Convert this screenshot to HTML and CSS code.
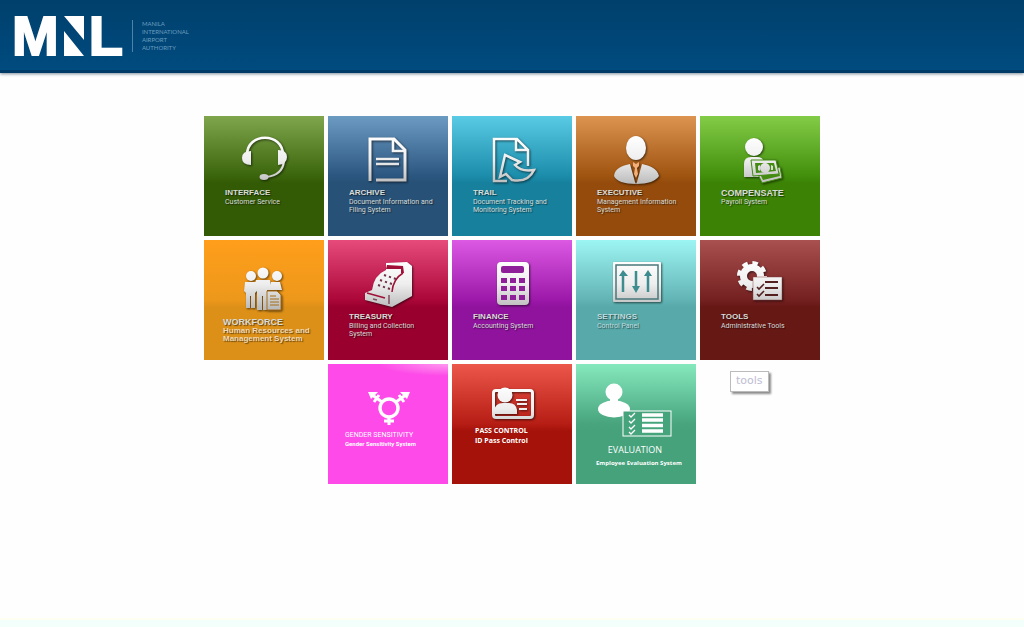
FILE: index.html
```html
<!DOCTYPE html>
<html lang="en">
<head>
<meta charset="utf-8">
<title>MNL Portal</title>
<meta name="viewport" content="width=device-width, initial-scale=1">
<link rel="stylesheet" href="styles.css">
</head>
<body>
<svg class="defs" aria-hidden="true">
  <defs>
    <linearGradient id="metal" gradientUnits="userSpaceOnUse" x1="0" y1="20" x2="0" y2="68">
      <stop offset="0" stop-color="#fff"/><stop offset=".5" stop-color="#eee"/><stop offset="1" stop-color="#bbb"/>
    </linearGradient>
  </defs>
</svg>
<header class="header">
  <div class="logo">
    <span>M</span>
    <svg class="mark" viewBox="0 0 20 40" aria-hidden="true"><path d="M0 0H20V24ZM0 15L20 40H0Z"/></svg>
    <span>L</span>
  </div>
  <div class="org">MANILA<br>INTERNATIONAL<br>AIRPORT<br>AUTHORITY</div>
</header>
<main class="main">
  <nav class="tiles">
    <a href="#" class="tile interface">
      <svg class="icon" viewBox="0 0 120 72"><g class="line"><path d="M43 39C43 16 79 16 79 39" stroke-width="2.6"/><path d="M80 45C79 55 72 60 62 61" stroke-width="2.2"/></g><path d="M47 35V49Q38 49 38 42Q38 35 47 35ZM74 34V49Q83 48 83 41Q83 34 74 34Z"/><ellipse cx="60" cy="61" rx="4.5" ry="3"/></svg>
      <strong>INTERFACE</strong><span>Customer Service</span>
    </a>
    <a href="#" class="tile archive">
      <svg class="icon" viewBox="0 0 120 72"><g class="line"><path d="M42 65V23H66L77 34V64H48" stroke-width="3"/><path d="M65 23V35H76" stroke-width="2.6"/><path d="M48 43H71M48 48H71" stroke-width="2.4"/></g></svg>
      <strong>ARCHIVE</strong><span>Document Information and Filing System</span>
    </a>
    <a href="#" class="tile trail">
      <svg class="icon" viewBox="0 0 120 72"><g class="line" stroke-width="2.5"><path d="M55 65H42V23H65L76 34V50M64 23V34H76"/><path d="M53 39L68 46L63 49Q69 56 82 54Q76 67 60 64L54 58L48 61Z"/></g></svg>
      <strong>TRAIL</strong><span>Document Tracking and Monitoring System</span>
    </a>
    <a href="#" class="tile executive">
      <svg class="icon" viewBox="0 0 120 72"><ellipse cx="60" cy="32" rx="10" ry="12"/><path d="M54 48L59 66L60 68C48 68 40 65 38 60C39 52 46 50 54 48ZM66 48L61 66L60 68C72 68 80 65 83 60C81 52 74 50 66 48Z"/><path d="M57 46L60 48L63 46V50L61 52L62 58L60 62L58 58L59 52L57 50Z" fill="#f6ae78"/></svg>
      <strong>EXECUTIVE</strong><span>Management Information System</span>
    </a>
    <a href="#" class="tile compensate">
      <svg class="icon" viewBox="0 0 120 72"><circle cx="54" cy="31" r="9"/><path d="M44 61V48Q44 41 51 41H57Q63 41 64 46V61Z"/><path d="M57 56L80 51L82 62L62 67Z" stroke="#438b12"/><path d="M60 58L79 55L80 60L63 64Z" fill="#438b12"/><path d="M51 44L76 44L79 58L53 60Z" stroke="#438b12"/><path d="M55 47L74 47L76 55L56 57Z" fill="#438b12"/><circle cx="65" cy="52" r="5"/><path d="M58 50L60 49V55L58 54ZM71 49L73 50V54L71 54Z"/></svg>
      <strong>COMPENSATE</strong><span>Payroll System</span>
    </a>
    <a href="#" class="tile workforce">
      <svg class="icon" viewBox="0 0 120 77"><circle cx="47" cy="36" r="5"/><circle cx="73" cy="36" r="5"/><circle cx="59" cy="33" r="5.5"/><path d="M41 42H52L53 51L51 53V68H47V56H46V68H42V53L40 51ZM67 42H76L78 50H67Z"/><path d="M52 40H66L68 50H63V70H59V56H58V70H53V51L50 48Z"/><path d="M63 51H73L77 55V70H63Z" stroke="#a56d18" stroke-width="1"/><path class="cut" d="M66 56H72M66 59H75M66 62H75M66 65H75" stroke="#a56d18" stroke-width="1"/></svg>
      <strong>WORKFORCE</strong><span>Human Resources and Management System</span>
    </a>
    <a href="#" class="tile treasury">
      <svg class="icon" viewBox="0 0 120 72"><path d="M58 23L79 22L84 26V56L64 67L37 60V53L44 50Q46 35 58 30Z"/><path class="cut" d="M75 33Q65 39 64 52M39 53L57 58" stroke="#a00f37" stroke-width="1.5"/><path d="M59 25L75 26L76 33H73V29H58Z" fill="#a00f37"/><path d="M56 35L68 39M52 40L64 44M50 45L62 49" fill="none" stroke="#70304a" stroke-width="2" stroke-dasharray="2.2 3"/><path d="M61 55V64M45 59L49 60" stroke="#805060" stroke-width="1.5"/></svg>
      <strong>TREASURY</strong><span>Billing and Collection System</span>
    </a>
    <a href="#" class="tile finance">
      <svg class="icon" viewBox="0 0 120 72"><rect x="45" y="22" width="32" height="43" rx="4"/><g fill="#8e1f98"><rect x="49" y="26" width="23" height="7" rx="2"/><path d="M49 38h6v5h-6zM58 38h6v5h-6zM67 38h6v5h-6zM49 46h6v5h-6zM58 46h6v5h-6zM67 46h6v5h-6zM49 55h6v5h-6zM58 55h6v5h-6zM67 55h6v5h-6z"/></g></svg>
      <strong>FINANCE</strong><span>Accounting System</span>
    </a>
    <a href="#" class="tile settings">
      <svg class="icon" viewBox="0 0 120 72"><rect x="37" y="22" width="48" height="40" rx="1"/><rect x="40" y="25" width="42" height="34" fill="none" stroke="#48777a" stroke-width="1.5"/><path d="M47 34V52M60 31V49M72 34V52" stroke="#3c8c90" stroke-width="2.5"/><path d="M47 30L52 36H43ZM60 53L64 46H56ZM72 30L76 36H68Z" fill="#3c8c90"/></svg>
      <strong>SETTINGS</strong><span>Control Panel</span>
    </a>
    <a href="#" class="tile tools" aria-describedby="tip">
      <svg class="icon" viewBox="0 0 120 72"><circle class="line" cx="52" cy="36" r="8.5" stroke-width="7"/><circle class="line" cx="52" cy="36" r="13" stroke-width="4" stroke-dasharray="5.5 4.71"/><rect x="53" y="37" width="29" height="23" stroke="#8b4a48" stroke-width=".5"/><path d="M65 42H78M65 48H78M65 55H78" stroke="#552020" stroke-width="2"/><path class="cut" d="M57 47L59 49L64 44M57 54L59 56L64 51" stroke="#552020" stroke-width="1.6"/></svg>
      <strong>TOOLS</strong><span>Administrative Tools</span>
      <em class="tip" id="tip" role="tooltip">tools</em>
    </a>
    <a href="#" class="tile gender">
      <svg class="icon" viewBox="0 0 120 66"><circle class="line" cx="61" cy="44" r="9" stroke-width="3.4"/><path class="line" d="M54 38L43 30M68 38L79 30M61 53V61M56 57H66M46 38L51 31M76 38L71 31" stroke-width="3"/><path d="M40 28H50L43 35ZM82 28H72L79 35Z"/></svg>
      <strong>GENDER SENSITIVITY</strong><span>Gender Sensitivity System</span>
    </a>
    <a href="#" class="tile pass">
      <svg class="icon" viewBox="0 0 120 62"><rect class="line" x="41.5" y="26.5" width="39" height="27" rx="2.5" stroke-width="3"/><circle cx="53" cy="31" r="7.5"/><path d="M42 50V47Q43 39 51 39H57Q64 39 65 46V50Z"/><path class="line" d="M64 36H75M65 40H75M67 45H75" stroke-width="2"/></svg>
      <strong>PASS CONTROL</strong><span>ID Pass Control</span>
    </a>
    <a href="#" class="tile evaluation">
      <svg class="icon" viewBox="0 0 120 80"><circle cx="38" cy="28" r="8.5"/><path d="M34 33H42V39H34Z"/><ellipse cx="38" cy="45" rx="16" ry="8.5"/><rect x="47" y="47" width="48" height="25" fill="#45a47c" stroke="#fff"/><path class="line" d="M66 51H87M66 56H87M66 61.500H87M66 67H87" stroke-width="3.4"/><path class="line" d="M53 51L55 53L59 49M53 57L55 59L59 55M53 63L55 65L59 61M53 68L55 70L59 66" stroke-width="1.3"/></svg>
      <strong>EVALUATION</strong><span>Employee Evaluation System</span>
    </a>
  </nav>
</main>
<footer class="footer"></footer>
</body>
</html>
```

FILE: styles.css
```css
* { box-sizing: border-box; }

body {
  margin: 0;
  min-height: 100vh;
  display: flex;
  flex-direction: column;
  background: #fefefe;
  font-family: "Liberation Sans", Arial, sans-serif;
}

.defs { position: absolute; width: 0; height: 0; }

.header {
  display: flex;
  align-items: center;
  gap: 9px;
  height: 73px;
  padding: 1px 12px 0;
  background: linear-gradient(#00406c, #004b7f);
  border-bottom: 3px solid #003a66;
  box-shadow: 0 1px 3px #7c8c98;
}

.logo {
  display: flex;
  align-items: center;
  gap: 4px;
  color: #fff;
  font-size: 56px;
  line-height: 64px;
  font-weight: bold;
  -webkit-text-stroke: 2px #fff;
}

.mark { width: 20px; height: 40px; margin: 0 1px; fill: #fff; }

.org {
  padding-left: 9px;
  border-left: 1px solid #4d83aa;
  color: #6b9dbf;
  font-family: Lato, sans-serif;
  font-size: 6px;
  line-height: 8px;
}

.main { flex: 1; padding: 43px 16px 16px; }

.tiles {
  display: grid;
  grid-template-columns: repeat(auto-fit, 120px);
  grid-auto-rows: 120px;
  gap: 4px;
  justify-content: center;
  max-width: 616px;
  margin: 0 auto;
}

.tile {
  --pad: 21px;
  position: relative;
  display: flex;
  flex-direction: column;
  background: linear-gradient(var(--top), var(--mid) 50%, var(--low) 56%, var(--low));
  color: #d8dcd8;
  text-decoration: none;
  text-shadow: 1px 1px 1px #0008;
}

.icon {
  display: block;
  width: 100%;
  fill: url(#metal);
  filter: drop-shadow(1px 1px 1px #0009);
}

.line { fill: none; stroke: url(#metal); }
.cut { fill: none; }

.tile strong { padding-left: var(--pad); font-size: 8px; line-height: 10px; }
.tile span {
  padding-left: var(--pad);
  padding-right: 12px;
  font-family: Roboto, sans-serif;
  font-size: 7px;
  line-height: 8px;
}

.interface { --top: #7fa64c; --mid: #3b650c; --low: #335a05; }
.archive { --top: #6c9bc2; --mid: #2b5680; --low: #275176; }
.trail { --top: #5acbe5; --mid: #1b8caa; --low: #16809d; }
.executive { --top: #dc9450; --mid: #9f5410; --low: #944b0c; }
.compensate { --top: #83cc48; --mid: #428f0c; --low: #3b8205; }
.workforce { --top: #ff9e1b; --mid: #ed981b; --low: #dc9018; --pad: 19px; }
.treasury { --top: #e64b7c; --mid: #ab0738; --low: #99002d; }
.finance { --top: #dc59e4; --mid: #9c18a8; --low: #8f139d; }
.settings { --top: #9df5f3; --mid: #62b4b4; --low: #58a9aa; }
.tools { --top: #a95050; --mid: #742020; --low: #661815; }
.gender { --pad: 17px; color: #fff; }
.pass { --top: #ed574b; --mid: #b61d14; --low: #a4120a; --pad: 23px; color: #fff; }
.evaluation { --top: #86e8bd; --mid: #47a47d; --low: #45a27b; --pad: 20px; color: #fff; }

.gender {
  grid-column: 2;
  text-shadow: none;
  background: radial-gradient(70px 12px at 100% 0, #ff98ef, #fd4ae8);
}

.workforce strong { font-size: 9px; }
.tile.workforce span {
  padding-right: 8px;
  color: #efd9b4;
  font-family: inherit;
  font-size: 8px;
  font-weight: bold;
}
.compensate strong { font-size: 9px; }
.settings { color: #bfdcdc; }
.gender strong { font-size: 7px; font-family: Roboto, sans-serif; font-weight: normal; }
.gender span { font-size: 6px; font-weight: bold; }
.gender .icon, .evaluation .icon { filter: none; fill: #fff; }
.gender .line, .evaluation .line { stroke: #fff; }
.pass, .evaluation { font-family: "Open Sans", sans-serif; text-shadow: none; }
.pass strong { font-size: 7px; }
.tile.pass span { font-family: inherit; font-weight: bold; line-height: 10px; }
.evaluation strong { font-size: 9px; line-height: 12px; padding: 0 2px 0 0; font-weight: normal; text-align: center; }
.tile.gender span { font-size: 6px; }
.tile.evaluation strong { padding-left: 0; }
.tile.evaluation span {
  padding-right: 0;
  font-family: inherit;
  font-size: 6px;
  font-weight: bold;
  line-height: 14px;
}

.tile .tip {
  position: absolute;
  left: 30px;
  top: 131px;
  padding: 1px 5px 2px;
  border: 1px solid #bbb;
  background: #fff;
  box-shadow: 2px 2px 2px #8c8c8c;
  color: #bdbdd2;
  font-family: "DejaVu Sans", sans-serif;
  font-size: 11px;
  font-style: normal;
  line-height: 16px;
  text-shadow: none;
}

.footer { height: 9px; background: #f3fffb; border-top: 2px solid #fefff0; }
```
